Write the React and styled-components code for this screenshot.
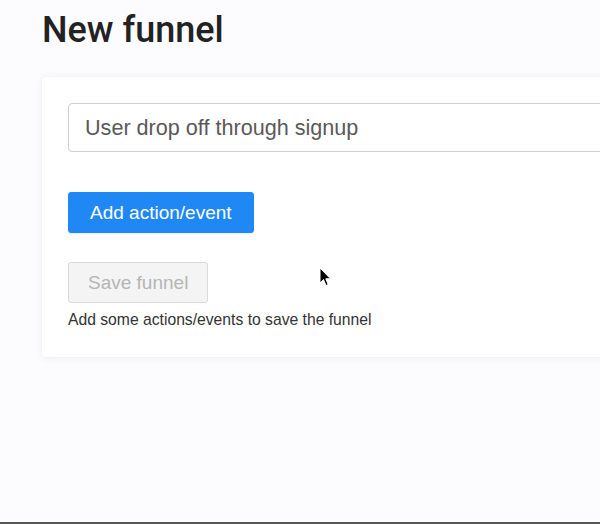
import React from "react";
import styled, { createGlobalStyle } from "styled-components";

const GlobalStyle = createGlobalStyle`
  html, body {
    margin: 0;
    padding: 0;
    overflow: hidden;
    background: #fcfbfd;
  }
  * {
    box-sizing: border-box;
  }
`;

const Page = styled.div`
  position: relative;
  height: 100vh;
  overflow: hidden;
  padding: 9px 0 0 42px;
  background: #fcfbfd;
  border-bottom: 2px solid #585858;
  font-family: "Liberation Sans", Arial, sans-serif;
  color: #333;
`;

const Title = styled.h1`
  margin: 0 0 25px;
  font-family: Roboto, "Liberation Sans", sans-serif;
  font-size: 36px;
  line-height: 43px;
  font-weight: 500;
  color: #222;
`;

const Card = styled.div`
  width: 640px;
  background: #fff;
  border-radius: 4px;
  box-shadow: 0 1px 8px rgba(0, 0, 0, 0.06), 0 0 2px rgba(0, 0, 0, 0.04);
  padding: 26px 0 27px 26px;
  display: flex;
  flex-direction: column;
  align-items: flex-start;
`;

const NameInput = styled.input`
  width: 100%;
  height: 49px;
  border: 1px solid #cfcfcf;
  border-radius: 4px;
  padding: 0 16px;
  font-family: "Liberation Sans", Arial, sans-serif;
  font-size: 21.6px;
  color: #595959;
  background: #fff;
  outline: none;
  margin-bottom: 40px;
`;

const Button = styled.button`
  height: 41px;
  padding: 0 ${(p) => p.pad}px;
  border-radius: 3px;
  font-family: "Liberation Sans", Arial, sans-serif;
  font-size: 19px;
  border: 1px solid ${(p) => (p.disabled ? "#d9d9d9" : "#1f88f5")};
  background: ${(p) => (p.disabled ? "#f4f4f5" : "#1f88f5")};
  color: ${(p) => (p.disabled ? "#b5b5b5" : "#fff")};
  box-shadow: ${(p) => (p.disabled ? "none" : "0 1px 2px rgba(0,0,0,0.08)")};
  margin-bottom: ${(p) => p.gap || 0}px;
`;

const Hint = styled.div`
  margin-top: 7px;
  font-size: 15.7px;
  line-height: 20px;
  color: #333;
`;

const Cursor = styled.svg`
  position: absolute;
  left: 319px;
  top: 267px;
`;

export default function App() {
  return (
    <Page>
      <GlobalStyle />
      <Title>New funnel</Title>
      <Card>
        <NameInput defaultValue="User drop off through signup" />
        <Button pad={21} gap={29}>Add action/event</Button>
        <Button pad={19} disabled>Save funnel</Button>
        <Hint>Add some actions/events to save the funnel</Hint>
      </Card>
      <Cursor width="14" height="22" viewBox="0 0 14 22">
        <path
          d="M1 1 L1 16 L4.5 12.5 L7 18.5 L9.2 17.6 L6.8 11.8 L11.5 11.8 Z"
          fill="#000"
          stroke="#fff"
          strokeWidth="1"
          strokeLinejoin="round"
        />
      </Cursor>
    </Page>
  );
}
